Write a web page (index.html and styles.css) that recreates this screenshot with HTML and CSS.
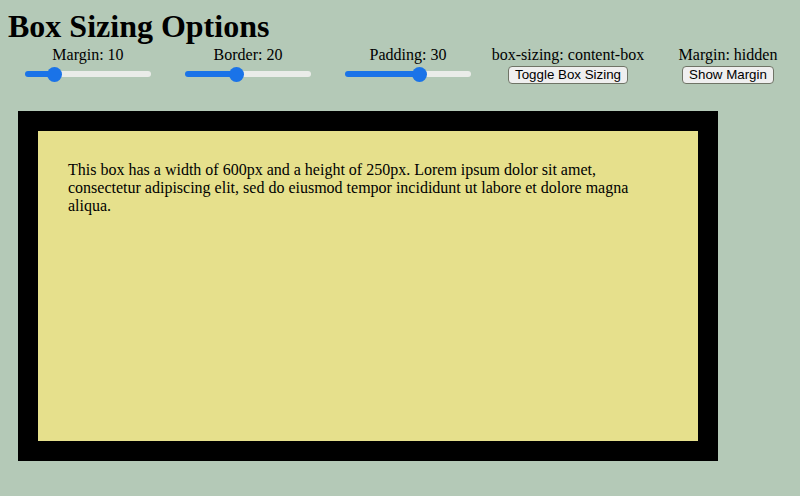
FILE: index.html
```html
<!DOCTYPE html>
<html>
<head>
<meta charset="utf-8">
<title>Box Sizing Options</title>
<link rel="stylesheet" href="styles.css">
</head>
<body>
<h1 class="title">Box Sizing Options</h1>
<div class="controls">
  <div class="control">
    <label class="label" for="m">Margin: 10</label>
    <input class="slider" id="m" type="range" min="0" max="50" value="10" style="--fill: 30px">
  </div>
  <div class="control">
    <label class="label" for="b">Border: 20</label>
    <input class="slider" id="b" type="range" min="0" max="50" value="20" style="--fill: 52px">
  </div>
  <div class="control">
    <label class="label" for="p">Padding: 30</label>
    <input class="slider" id="p" type="range" min="0" max="50" value="30" style="--fill: 74px">
  </div>
  <div class="control">
    <span class="label">box-sizing: content-box</span>
    <button class="btn" type="button">Toggle Box Sizing</button>
  </div>
  <div class="control">
    <span class="label">Margin: hidden</span>
    <button class="btn" type="button">Show Margin</button>
  </div>
</div>
<div class="box">
  <p class="box-text">This box has a width of 600px and a height of 250px. Lorem ipsum dolor sit amet, consectetur adipiscing elit, sed do eiusmod tempor incididunt ut labore et dolore magna aliqua.</p>
</div>
</body>
</html>
```

FILE: styles.css
```css
html {
  overflow: hidden;
}

body {
  margin: 8px;
  background: #b4c9b7;
  font-family: "Liberation Serif", "Times New Roman", serif;
  font-size: 16px;
  color: #000;
}

.title {
  margin: 0;
  font-size: 32px;
  font-weight: bold;
  line-height: 37px;
}

.controls {
  display: grid;
  grid-template-columns: repeat(5, 160px);
  padding-bottom: 17px;
}

.control {
  display: flex;
  flex-direction: column;
  align-items: center;
}

.label {
  line-height: 18px;
  height: 18px;
  margin-top: 1px;
  white-space: nowrap;
}

.slider {
  -webkit-appearance: none;
  appearance: none;
  width: 126px;
  height: 16px;
  margin: 2px 0 0;
  padding: 0;
  background: transparent;
}

.slider::-webkit-slider-runnable-track {
  height: 6px;
  border-radius: 3px;
  background: linear-gradient(to right, #1a73e8 0, #1a73e8 var(--fill), #eaece9 var(--fill), #eaece9 100%);
}

.slider::-webkit-slider-thumb {
  -webkit-appearance: none;
  appearance: none;
  width: 15px;
  height: 15px;
  margin-top: -4.5px;
  border-radius: 50%;
  background: #1a73e8;
  border: none;
}

.btn {
  margin-top: 2px;
  font-family: "Liberation Sans", Arial, sans-serif;
  font-size: 13.33px;
  line-height: 16px;
  height: 18px;
  padding: 0 6px;
  border: 1px solid #6f7466;
  border-radius: 4px;
  background: #efefef;
  color: #000;
}

.box {
  width: 600px;
  height: 250px;
  margin: 10px;
  padding: 30px;
  border: 20px solid #000;
  background: #e6e08c;
}

.box-text {
  margin: 0;
}
```
